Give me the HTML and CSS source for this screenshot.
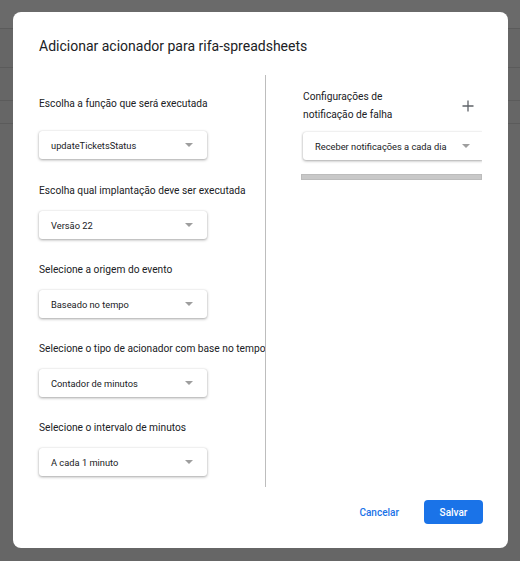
FILE: index.html
```html
<!DOCTYPE html>
<html lang="pt-BR">
<head>
<meta charset="utf-8">
<title>Adicionar acionador</title>
<link rel="stylesheet" href="styles.css">
</head>
<body>
<div class="backdrop">
  <div class="bg-row bg-row-top"></div>
  <div class="bg-row bg-row-2"></div>
  <div class="bg-row bg-row-3"></div>
  <div class="bg-row bg-row-4"></div>
</div>

<div class="dialog" role="dialog">
  <h1 class="dialog-title">Adicionar acionador para rifa-spreadsheets</h1>

  <div class="dialog-body">
    <div class="col-left">
      <div class="field field-first">
        <div class="field-label">Escolha a função que será executada</div>
        <div class="select"><span>updateTicketsStatus</span><i class="arrow"></i></div>
      </div>
      <div class="field">
        <div class="field-label">Escolha qual implantação deve ser executada</div>
        <div class="select"><span>Versão 22</span><i class="arrow"></i></div>
      </div>
      <div class="field">
        <div class="field-label">Selecione a origem do evento</div>
        <div class="select"><span>Baseado no tempo</span><i class="arrow"></i></div>
      </div>
      <div class="field">
        <div class="field-label nowrap">Selecione o tipo de acionador com base no tempo</div>
        <div class="select"><span>Contador de minutos</span><i class="arrow"></i></div>
      </div>
      <div class="field">
        <div class="field-label">Selecione o intervalo de minutos</div>
        <div class="select"><span>A cada 1 minuto</span><i class="arrow"></i></div>
      </div>
    </div>

    <div class="divider"></div>

    <div class="col-right">
      <div class="notif-head">
        <div class="notif-title">Configurações de<br>notificação de falha</div>
        <svg class="plus" width="12" height="12" viewBox="0 0 12 12"><path d="M6 0.5v11M0.5 6h11" stroke="#5f6368" stroke-width="1.3" fill="none"/></svg>
      </div>
      <div class="scroller">
        <div class="scroll-content">
          <div class="select select-wide"><span>Receber notificações a cada dia</span><i class="arrow"></i></div>
        </div>
        <div class="hscrollbar"></div>
      </div>
    </div>
  </div>

  <div class="dialog-footer">
    <button class="btn btn-text">Cancelar</button>
    <button class="btn btn-primary">Salvar</button>
  </div>
</div>
</body>
</html>
```

FILE: styles.css
```css
html, body {
  margin: 0;
  padding: 0;
}
body {
  width: 520px;
  height: 561px;
  background: #666666;
  font-family: Roboto, "Liberation Sans", Arial, sans-serif;
  overflow: hidden;
  position: relative;
}

.backdrop {
  display: flex;
  flex-direction: column;
}
.bg-row {
  border-bottom: 1px solid #5b5b5b;
}
.bg-row-top { height: 28px; background: #6a6a6a; }
.bg-row-2 { height: 38px; }
.bg-row-3 { height: 32px; }
.bg-row-4 { height: 22px; }

.dialog {
  position: absolute;
  left: 13px;
  top: 12px;
  width: 495px;
  height: 536px;
  box-sizing: border-box;
  background: #ffffff;
  border-radius: 8px;
  padding: 24px 25px 24px 26px;
  display: flex;
  flex-direction: column;
}

.dialog-title {
  margin: 0 0 19px;
  font-size: 14px;
  line-height: 20px;
  font-weight: 400;
  color: #202124;
}

.dialog-body {
  height: 412px;
  display: flex;
}

.col-left {
  width: 226px;
  padding-top: 21px;
  display: flex;
  flex-direction: column;
}

.field {
  display: flex;
  flex-direction: column;
  margin-bottom: 23px;
}
.field-label {
  font-size: 10.2px;
  line-height: 16px;
  color: #202124;
  margin-bottom: 12px;
}
.field-first {
  margin-bottom: 24px;
}
.field-first .field-label {
  margin-bottom: 19px;
}
.nowrap { white-space: nowrap; }

.select {
  width: 168px;
  height: 28px;
  box-sizing: border-box;
  background: #fff;
  border-radius: 3px;
  box-shadow: 0 1px 3px rgba(0,0,0,0.35), 0 0 1px rgba(0,0,0,0.15);
  display: flex;
  align-items: center;
  justify-content: space-between;
  padding: 0 14px 0 12px;
  font-size: 9.3px;
  color: #202124;
}
.arrow {
  width: 0;
  height: 0;
  border-left: 4px solid transparent;
  border-right: 4px solid transparent;
  border-top: 4px solid #9e9e9e;
}

.divider {
  width: 1px;
  background: #bdbdbd;
}

.col-right {
  margin-left: 35px;
  width: 181px;
  padding-top: 13px;
  display: flex;
  flex-direction: column;
}
.notif-head {
  display: flex;
  align-items: center;
  justify-content: space-between;
  padding-left: 2px;
  width: 171px;
}
.notif-title {
  font-size: 10.2px;
  line-height: 18px;
  color: #202124;
}

.scroller {
  margin-top: 6px;
  width: 181px;
  overflow: hidden;
}
.scroll-content {
  padding: 2px 0 14px 2px;
}
.select-wide {
  width: 181px;
}
.hscrollbar {
  height: 4px;
  width: 179px;
  background: #c8c8c8;
  border: 1px solid #bcbcbc;
}

.dialog-footer {
  margin-top: 13px;
  display: flex;
  justify-content: flex-end;
  align-items: center;
  gap: 14px;
}
.btn {
  font-family: Roboto, "Liberation Sans", Arial, sans-serif;
  font-size: 10px;
  font-weight: 500;
  height: 24px;
  border: none;
  border-radius: 4px;
  cursor: pointer;
  padding: 0 11px;
}
.btn-text {
  background: transparent;
  color: #1a73e8;
}
.btn-primary {
  width: 59px;
  background: #1a73e8;
  color: #fff;
}
```
